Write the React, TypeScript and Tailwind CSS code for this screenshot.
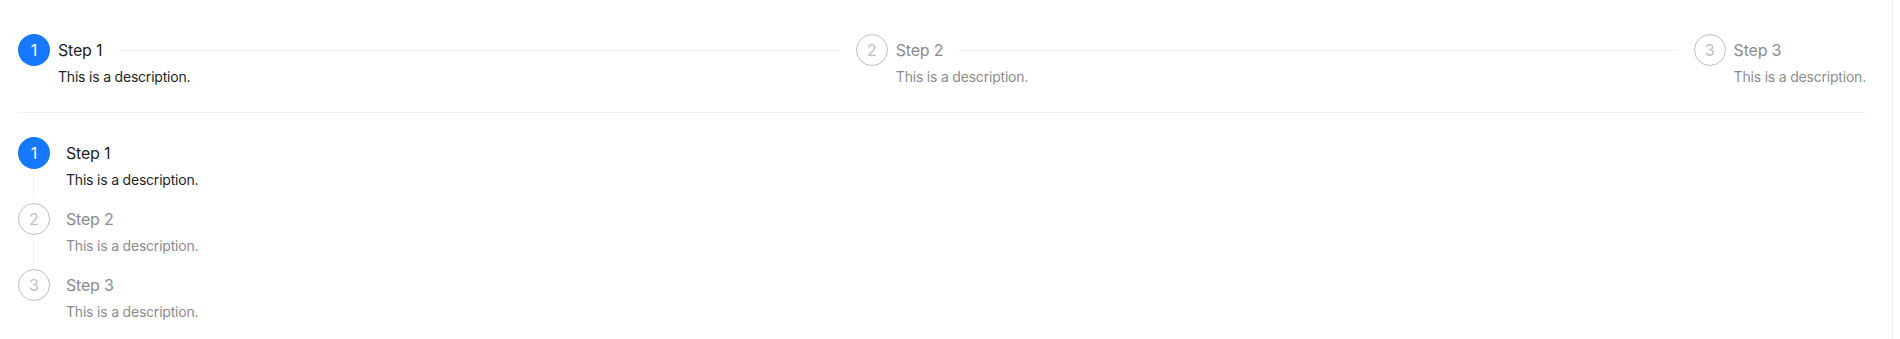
const steps = [
  { title: "Step 1", description: "This is a description." },
  { title: "Step 2", description: "This is a description." },
  { title: "Step 3", description: "This is a description." },
];

const current = 0;

function StepIcon({ index }: { index: number }) {
  const active = index === current;
  return (
    <div
      className={
        active
          ? "flex h-8 w-8 shrink-0 items-center justify-center rounded-full bg-[#1677ff] text-base text-white"
          : "flex h-8 w-8 shrink-0 items-center justify-center rounded-full border border-[#bfbfbf] text-base text-[#bfbfbf]"
      }
    >
      {index + 1}
    </div>
  );
}

function HorizontalSteps() {
  return (
    <div className="flex">
      {steps.map((step, i) => {
        const active = i === current;
        const last = i === steps.length - 1;
        return (
          <div
            key={step.title}
            className={
              (last ? "flex-none " : "min-w-0 flex-1 ") +
              (i > 0 ? "pl-4 " : "") +
              "overflow-hidden"
            }
          >
            <div className="flex items-start">
              <StepIcon index={i} />
              <div className="ml-2">
                <div
                  className={
                    "relative inline-block pr-4 text-base leading-8 tracking-[-0.2px] " +
                    (active ? "text-[#1f1f1f]" : "text-[#8c8c8c]")
                  }
                >
                  {step.title}
                  {!last && (
                    <span className="absolute left-full top-4 block h-px w-[9999px] bg-[#f0f0f0]" />
                  )}
                </div>
                <div
                  className={
                    "text-sm leading-[22px] tracking-[-0.2px] " +
                    (active ? "text-[#1f1f1f]" : "text-[#8c8c8c]")
                  }
                >
                  {step.description}
                </div>
              </div>
            </div>
          </div>
        );
      })}
    </div>
  );
}

function VerticalSteps() {
  return (
    <div className="flex flex-col">
      {steps.map((step, i) => {
        const active = i === current;
        const last = i === steps.length - 1;
        return (
          <div key={step.title} className="relative flex">
            {!last && (
              <div className="absolute bottom-[6px] left-[15px] top-[38px] w-px bg-[#f0f0f0]" />
            )}
            <StepIcon index={i} />
            <div className="ml-4 pb-3">
              <div
                className={
                  "text-base leading-8 tracking-[-0.2px] " +
                  (active ? "text-[#1f1f1f]" : "text-[#8c8c8c]")
                }
              >
                {step.title}
              </div>
              <div
                className={
                  "text-sm leading-[22px] tracking-[-0.2px] " +
                  (active ? "text-[#1f1f1f]" : "text-[#8c8c8c]")
                }
              >
                {step.description}
              </div>
            </div>
          </div>
        );
      })}
    </div>
  );
}

export default function App() {
  return (
    <div className="flex h-[339px] w-full bg-white font-['Inter',sans-serif]">
      <div className="min-w-0 flex-1 border-r border-[#eeeeee] pl-[18px] pr-[26px] pt-[34px]">
        <HorizontalSteps />
        <div className="my-6 h-px bg-[#f0f0f0]" />
        <VerticalSteps />
      </div>
      <div className="w-[7px] shrink-0" />
    </div>
  );
}
